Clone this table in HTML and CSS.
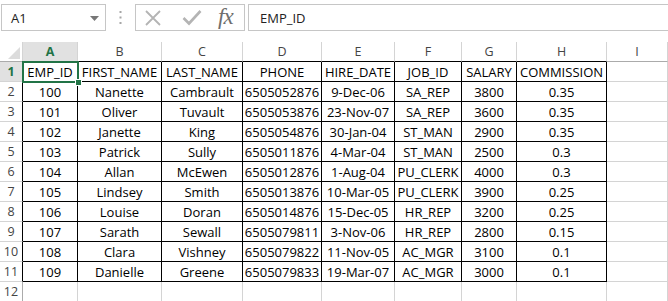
FILE: index.html
```html
<!DOCTYPE html>
<html>
<head>
<meta charset="utf-8">
<link rel="stylesheet" href="styles.css">
</head>
<body>
<div class="app">
  <div class="fbar">
    <div class="namebox">
      <span class="nb-text">A1</span>
      <svg class="nb-arrow" width="9" height="5" viewBox="0 0 9 5"><path d="M0 0 H9 L4.5 5 Z" fill="#777"/></svg>
    </div>
    <div class="grip">
      <svg width="3" height="13" viewBox="0 0 3 13"><rect x="0.5" y="0" width="2" height="2" fill="#a6a6a6"/><rect x="0.5" y="5.5" width="2" height="2" fill="#a6a6a6"/><rect x="0.5" y="11" width="2" height="2" fill="#a6a6a6"/></svg>
    </div>
    <div class="fnbox">
      <svg class="ic-x" width="18" height="18" viewBox="0 0 18 18"><path d="M2 2 L16 16 M16 2 L2 16" stroke="#b4b4b4" stroke-width="1.8" fill="none"/></svg>
      <svg class="ic-ok" width="20" height="17" viewBox="0 0 20 17"><path d="M1.5 9 L7 14.5 L18.5 2" stroke="#b4b4b4" stroke-width="2.6" fill="none"/></svg>
      <span class="fx">fx</span>
    </div>
    <div class="finput">EMP_ID</div>
  </div>

  <div class="sheet">
    <div class="corner"><svg width="12" height="12" viewBox="0 0 12 12"><path d="M12 0 V12 H0 Z" fill="#dcdcdc"/></svg></div>
    <div class="ch b sel">A</div>
    <div class="ch b">B</div>
    <div class="ch b">C</div>
    <div class="ch b">D</div>
    <div class="ch b">E</div>
    <div class="ch b">F</div>
    <div class="ch b">G</div>
    <div class="ch b">H</div>
    <div class="ch">I</div>

    <div class="rh b sel">1</div>
    <div class="d">EMP_ID</div><div class="d">FIRST_NAME</div><div class="d">LAST_NAME</div><div class="d">PHONE</div><div class="d">HIRE_DATE</div><div class="d">JOB_ID</div><div class="d">SALARY</div><div class="d">COMMISSION</div><div class="c"></div>

    <div class="rh b">2</div>
    <div class="d">100</div><div class="d">Nanette</div><div class="d">Cambrault</div><div class="d">6505052876</div><div class="d">9-Dec-06</div><div class="d">SA_REP</div><div class="d">3800</div><div class="d">0.35</div><div class="c"></div>

    <div class="rh b">3</div>
    <div class="d">101</div><div class="d">Oliver</div><div class="d">Tuvault</div><div class="d">6505053876</div><div class="d">23-Nov-07</div><div class="d">SA_REP</div><div class="d">3600</div><div class="d">0.35</div><div class="c"></div>

    <div class="rh b">4</div>
    <div class="d">102</div><div class="d">Janette</div><div class="d">King</div><div class="d">6505054876</div><div class="d">30-Jan-04</div><div class="d">ST_MAN</div><div class="d">2900</div><div class="d">0.35</div><div class="c"></div>

    <div class="rh b">5</div>
    <div class="d">103</div><div class="d">Patrick</div><div class="d">Sully</div><div class="d">6505011876</div><div class="d">4-Mar-04</div><div class="d">ST_MAN</div><div class="d">2500</div><div class="d">0.3</div><div class="c"></div>

    <div class="rh b">6</div>
    <div class="d">104</div><div class="d">Allan</div><div class="d">McEwen</div><div class="d">6505012876</div><div class="d">1-Aug-04</div><div class="d">PU_CLERK</div><div class="d">4000</div><div class="d">0.3</div><div class="c"></div>

    <div class="rh b">7</div>
    <div class="d">105</div><div class="d">Lindsey</div><div class="d">Smith</div><div class="d">6505013876</div><div class="d">10-Mar-05</div><div class="d">PU_CLERK</div><div class="d">3900</div><div class="d">0.25</div><div class="c"></div>

    <div class="rh b">8</div>
    <div class="d">106</div><div class="d">Louise</div><div class="d">Doran</div><div class="d">6505014876</div><div class="d">15-Dec-05</div><div class="d">HR_REP</div><div class="d">3200</div><div class="d">0.25</div><div class="c"></div>

    <div class="rh b">9</div>
    <div class="d">107</div><div class="d">Sarath</div><div class="d">Sewall</div><div class="d">6505079811</div><div class="d">3-Nov-06</div><div class="d">HR_REP</div><div class="d">2800</div><div class="d">0.15</div><div class="c"></div>

    <div class="rh b">10</div>
    <div class="d">108</div><div class="d">Clara</div><div class="d">Vishney</div><div class="d">6505079822</div><div class="d">11-Nov-05</div><div class="d">AC_MGR</div><div class="d">3100</div><div class="d">0.1</div><div class="c"></div>

    <div class="rh b">11</div>
    <div class="d">109</div><div class="d">Danielle</div><div class="d">Greene</div><div class="d">6505079833</div><div class="d">19-Mar-07</div><div class="d">AC_MGR</div><div class="d">3000</div><div class="d">0.1</div><div class="c"></div>

    <div class="rh">12</div>
    <div class="c"></div><div class="c"></div><div class="c"></div><div class="c"></div><div class="c"></div><div class="c"></div><div class="c"></div><div class="c"></div><div class="c"></div>

    <div class="selbox"><span class="handle"></span></div>
  </div>
</div>
</body>
</html>
```

FILE: styles.css
```css
* { box-sizing: border-box; }
html, body {
  margin: 0;
  padding: 0;
  background: #fff;
  overflow: hidden;
}
.app {
  width: 668px;
  height: 301px;
  font-family: "Open Sans", "Liberation Sans", sans-serif;
  color: #000;
}

/* formula bar */
.fbar {
  height: 42px;
  display: flex;
  align-items: flex-start;
  padding-top: 4px;
  padding-left: 1px;
}
.namebox {
  width: 105px;
  height: 27px;
  border: 1px solid #c6c6c6;
  display: flex;
  align-items: center;
  justify-content: space-between;
  padding: 0 6px 0 9px;
  font-size: 13px;
  color: #222;
}
.nb-arrow { margin-top: 1px; }
.grip {
  width: 29px;
  height: 27px;
  display: flex;
  align-items: center;
  justify-content: center;
}
.fnbox {
  width: 110px;
  height: 27px;
  border: 1px solid #c6c6c6;
  display: flex;
  align-items: center;
  padding-left: 8px;
}
.ic-x { margin-right: 20px; }
.ic-ok { margin-right: 16px; }
.fx {
  font-family: "Liberation Serif", "DejaVu Serif", serif;
  font-style: italic;
  font-size: 23px;
  line-height: 1;
  color: #6e6e6e;
  letter-spacing: -1px;
  margin-top: -3px;
}
.finput {
  flex: 1;
  height: 27px;
  margin-left: 3px;
  border: 1px solid #c6c6c6;
  border-right: none;
  display: flex;
  align-items: center;
  padding-left: 11px;
  font-size: 13px;
  color: #222;
}

/* sheet grid */
.sheet {
  position: relative;
  display: grid;
  grid-template-columns: 23px 55px 84px 81px 79px 73px 67px 55px 90px 1fr;
  grid-auto-rows: 20px;
  font-size: 13px;
}
.sheet > div {
  border-right: 1px solid #d4d4d4;
  border-bottom: 1px solid #d4d4d4;
  display: flex;
  align-items: center;
  justify-content: center;
  white-space: nowrap;
  overflow: hidden;
}
.corner {
  justify-content: flex-end !important;
  align-items: flex-end !important;
  padding: 0 2px 2px 0;
  border-bottom-color: #ababab !important;
  border-right-color: #d4d4d4;
}
.ch {
  color: #444;
  font-size: 12.5px;
  border-bottom-color: #ababab !important;
}
.ch.b { border-bottom-color: #000 !important; }
.ch.sel {
  background: #e1e1e1;
  color: #217346;
  font-weight: 700;
}
.rh {
  color: #444;
  font-size: 12.5px;
  border-right-color: #ababab !important;
  border-bottom-color: #d4d4d4;
}
.rh.b { border-right-color: #000 !important; }
.rh.sel {
  background: #e1e1e1;
  color: #217346;
  font-weight: 700;
}
.sheet > .d {
  border-right-color: #000;
  border-bottom-color: #000;
  padding-top: 1px;
}
.sheet > .selbox {
  position: absolute;
  left: 22px;
  top: 19px;
  width: 57px;
  height: 22px;
  border: 2px solid #217346;
  overflow: visible;
  background: transparent;
}
.handle {
  position: absolute;
  right: -5px;
  bottom: -5px;
  width: 7px;
  height: 7px;
  background: #217346;
  border: 1px solid #fff;
}
```
